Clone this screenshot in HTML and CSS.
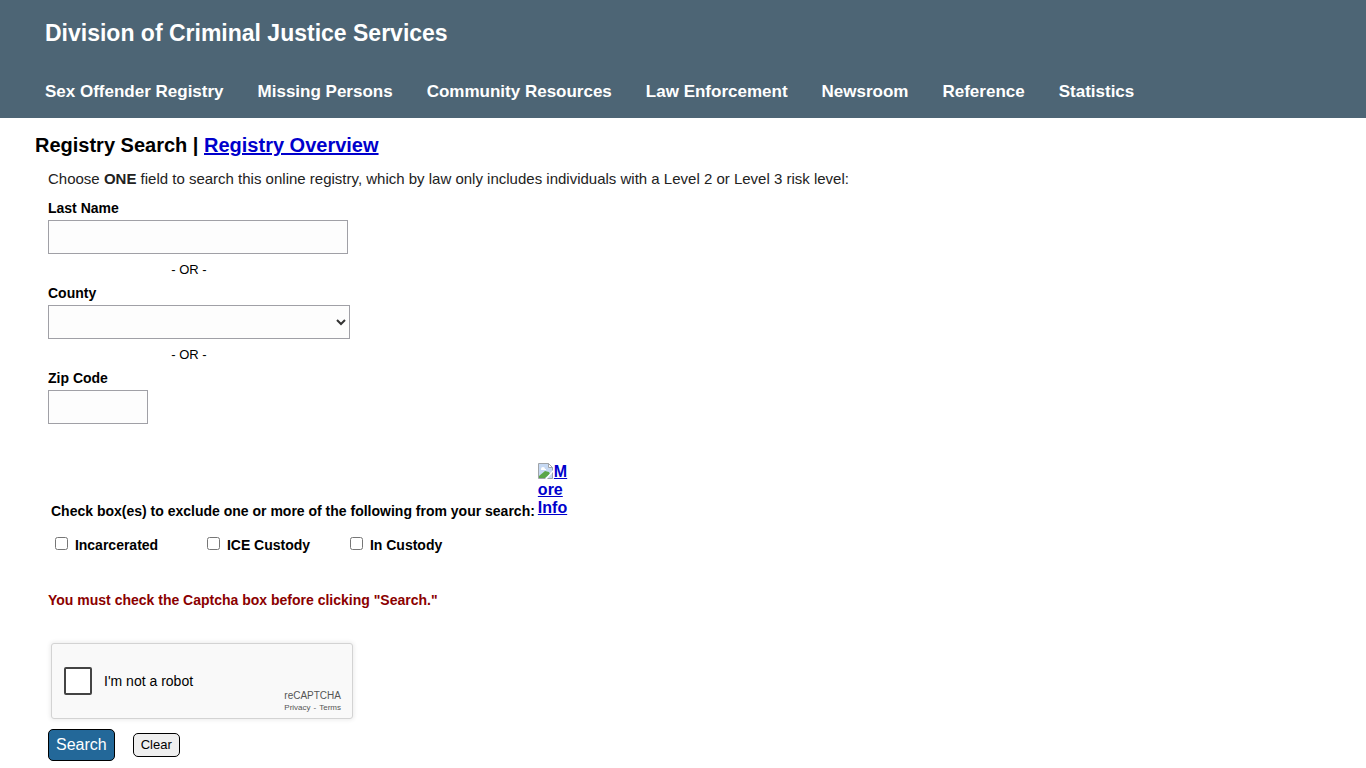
FILE: index.html
```html
<!DOCTYPE html>
<html lang="en">
<head>
  <meta charset="UTF-8">
  <meta name="viewport" content="width=device-width, initial-scale=1">
  <title>Registry Search</title>
  <link rel="stylesheet" href="styles.css">
</head>
<body>

  <header class="site-header">
    <div class="site-title">Division of Criminal Justice Services</div>
    <nav class="site-nav">
      <a href="#">Sex Offender Registry</a>
      <a href="#">Missing Persons</a>
      <a href="#">Community Resources</a>
      <a href="#">Law Enforcement</a>
      <a href="#">Newsroom</a>
      <a href="#">Reference</a>
      <a href="#">Statistics</a>
    </nav>
  </header>

  <main class="content">
    <h1>Registry Search | <a href="#">Registry Overview</a></h1>

    <form class="search-form" action="#">
      <p class="intro">Choose <strong>ONE</strong> field to search this online registry, which by law only includes individuals with a Level 2 or Level 3 risk level:</p>

      <label class="field-label" for="lastName">Last Name</label>
      <input class="field" type="text" id="lastName">
      <div class="or">- OR -</div>

      <label class="field-label" for="county">County</label>
      <select class="field field-select" id="county">
        <option></option>
      </select>
      <div class="or">- OR -</div>

      <label class="field-label" for="zip">Zip Code</label>
      <input class="field field-zip" type="text" id="zip">

      <!-- Exclusions -->
      <div class="exclude-head">
        <span>Check box(es) to exclude one or more of the following from your search:</span>
        <a class="more-info" href="#"><svg class="broken-icon" width="16" height="16" viewBox="0 0 16 16">
          <path d="M.5 .5h10l4 4v11H.5z" fill="#c6d9f3" stroke="#a0a4a8"/>
          <path d="M3 6a2 2 0 0 1 4 0h1v1H3z" fill="#fff"/>
          <path d="M1 15v-2l6-5 4 1 1 2-5 4z" fill="#5aa648"/>
          <path d="M10.5 .5v4h4z" fill="#fff" stroke="#a0a4a8"/>
          <path d="M7 16l8-9v2l-6 7z" fill="#fff"/>
        </svg>M<br>ore<br>Info</a>
      </div>
      <div class="exclude-list">
        <label><input type="checkbox"> Incarcerated</label>
        <label><input type="checkbox"> ICE Custody</label>
        <label><input type="checkbox"> In Custody</label>
      </div>

      <p class="warning">You must check the Captcha box before clicking "Search."</p>

      <div class="captcha">
        <label class="captcha-check"><input type="checkbox"> I'm not a robot</label>
        <div class="captcha-brand">
          <div class="captcha-name">reCAPTCHA</div>
          <div class="captcha-links"><a href="#">Privacy</a><span>-</span><a href="#">Terms</a></div>
        </div>
      </div>

      <div class="buttons">
        <button class="btn-search" type="submit">Search</button>
        <button class="btn-clear" type="reset">Clear</button>
      </div>
    </form>
  </main>

</body>
</html>
```
FILE: styles.css
```css
* {
  box-sizing: border-box;
}

body {
  margin: 0;
  background: #fff;
  color: #000;
  font-family: Arial, "Liberation Sans", sans-serif;
  font-size: 14px;
}

/* Header */
.site-header {
  padding: 20px 45px 16px;
  background: #4d6575;
  color: #fff;
  font-weight: bold;
}

.site-title {
  font-size: 23px;
  line-height: 26px;
}

.site-nav {
  display: flex;
  gap: 34px;
  margin-top: 36px;
  font-size: 17px;
  line-height: 20px;
}

.site-nav a {
  color: #fff;
  text-decoration: none;
}

/* Content */
.content {
  padding: 15px 35px 6px;
}

h1 {
  margin: 0;
  font-size: 20px;
  line-height: 24px;
}

a {
  color: #0000cc;
}

.search-form {
  padding-left: 13px;
}

.intro {
  margin: 12px 0 10px;
  color: #222;
  font-size: 15px;
  line-height: 20px;
}

.field-label {
  display: block;
  font-weight: bold;
  line-height: 18px;
  margin-bottom: 3px;
}

.field {
  display: block;
  width: 300px;
  height: 34px;
  border: 1px solid #a0a0a6;
  border-radius: 0;
  background: #fdfdfd;
  color: #333;
  font-size: 14px;
}

.field-select {
  width: 302px;
}

.field-zip {
  width: 100px;
}

.or {
  width: 282px;
  margin: 7px 0 6px;
  font-size: 13px;
  line-height: 17px;
  text-align: center;
}

.exclude-head {
  display: flex;
  align-items: flex-end;
  gap: 3px;
  margin: 39px 0 0 3px;
  font-weight: bold;
  line-height: 18px;
}

.more-info {
  padding-bottom: 3px;
  font-size: 16px;
}

.broken-icon {
  vertical-align: -2px;
}

.exclude-list {
  display: grid;
  grid-template-columns: 152px 143px auto;
  margin: 16px 0 0 3px;
  font-weight: bold;
  line-height: 18px;
}

.exclude-list input {
  width: 13px;
  height: 13px;
  margin: 0 3px 0 4px;
}

.warning {
  margin: 37px 0 34px;
  color: #8b0000;
  font-weight: bold;
  line-height: 18px;
}

/* Captcha */
.captcha {
  display: flex;
  justify-content: space-between;
  width: 302px;
  height: 76px;
  margin-left: 3px;
  padding: 0 11px 0 12px;
  border: 1px solid #d3d3d3;
  border-radius: 3px;
  background: #f9f9f9;
  box-shadow: 0 0 4px 1px rgba(0, 0, 0, 0.08);
}

.captcha-check {
  display: flex;
  align-items: center;
  gap: 12px;
}

.captcha-check input {
  appearance: none;
  width: 28px;
  height: 28px;
  margin: 0;
  border: 2px solid #444;
  border-radius: 2px;
  background: #fff;
}

.captcha-brand {
  align-self: flex-end;
  padding-bottom: 4px;
  color: #555;
  text-align: right;
}

.captcha-name {
  font-size: 10px;
  line-height: 12px;
}

.captcha-links {
  display: flex;
  justify-content: flex-end;
  gap: 3px;
  font-size: 8px;
  line-height: 12px;
}

.captcha-links a {
  color: #555;
  text-decoration: none;
}

/* Buttons */
.buttons {
  display: flex;
  align-items: center;
  gap: 18px;
  margin-top: 10px;
}

.buttons button {
  border: 1px solid #000;
  border-radius: 5px;
  font-family: inherit;
}

.btn-search {
  padding: 6px 7px;
  background: #236899;
  color: #fff;
  font-size: 16px;
  line-height: 18px;
}

.btn-clear {
  padding: 3px 7px;
  background: #efefef;
  font-size: 13px;
  line-height: 16px;
}
```
